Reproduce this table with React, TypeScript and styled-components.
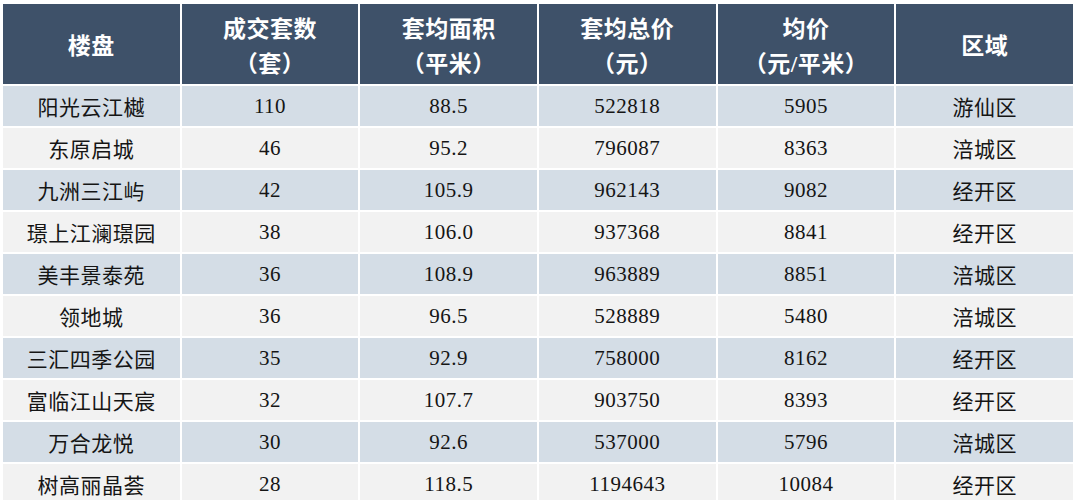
import React from "react";
import styled, { createGlobalStyle } from "styled-components";

const GlobalStyle = createGlobalStyle`
  html, body {
    margin: 0;
    padding: 0;
    background: #ffffff;
  }
`;

const Page = styled.div`
  padding: 4px 3px 0 3px;
  width: 1076px;
  height: 500px;
  box-sizing: border-box;
  overflow: hidden;
  background: #ffffff;
`;

const Table = styled.div`
  display: grid;
  grid-template-columns: repeat(6, 1fr);
  grid-auto-rows: 40px;
  grid-template-rows: 80px;
  gap: 2px;
  background: #ffffff;
`;

const HeadCell = styled.div`
  display: flex;
  flex-direction: column;
  align-items: center;
  justify-content: center;
  padding-top: 5px;
  background: #3e5169;
  color: #ffffff;
  font-family: "Liberation Serif", "Noto Sans CJK SC", serif;
  font-weight: 700;
  font-size: 23px;
  line-height: 35px;
  letter-spacing: 0.5px;
`;

const Cell = styled.div<{ $shade: boolean }>`
  display: flex;
  align-items: center;
  justify-content: center;
  background: ${(p) => (p.$shade ? "#d4dde6" : "#f2f2f2")};
  color: #151515;
  font-family: "Liberation Serif", "Noto Sans CJK SC", serif;
  font-size: 21px;
  letter-spacing: 0.5px;
`;

const headers: string[][] = [
  ["楼盘"],
  ["成交套数", "（套）"],
  ["套均面积", "（平米）"],
  ["套均总价", "（元）"],
  ["均价", "（元/平米）"],
  ["区域"]
];

const rows: string[][] = [
  ["阳光云江樾", "110", "88.5", "522818", "5905", "游仙区"],
  ["东原启城", "46", "95.2", "796087", "8363", "涪城区"],
  ["九洲三江屿", "42", "105.9", "962143", "9082", "经开区"],
  ["璟上江澜璟园", "38", "106.0", "937368", "8841", "经开区"],
  ["美丰景泰苑", "36", "108.9", "963889", "8851", "涪城区"],
  ["领地城", "36", "96.5", "528889", "5480", "涪城区"],
  ["三汇四季公园", "35", "92.9", "758000", "8162", "经开区"],
  ["富临江山天宸", "32", "107.7", "903750", "8393", "经开区"],
  ["万合龙悦", "30", "92.6", "537000", "5796", "涪城区"],
  ["树高丽晶荟", "28", "118.5", "1194643", "10084", "经开区"]
];

export default function App() {
  return (
    <>
      <GlobalStyle />
      <Page>
        <Table>
          {headers.map((h) => (
            <HeadCell key={h[0]}>
              {h.map((line) => (
                <span key={line}>{line}</span>
              ))}
            </HeadCell>
          ))}
          {rows.map((row, i) =>
            row.map((v, j) => (
              <Cell key={`${i}-${j}`} $shade={i % 2 === 0}>
                {v}
              </Cell>
            ))
          )}
        </Table>
      </Page>
    </>
  );
}
